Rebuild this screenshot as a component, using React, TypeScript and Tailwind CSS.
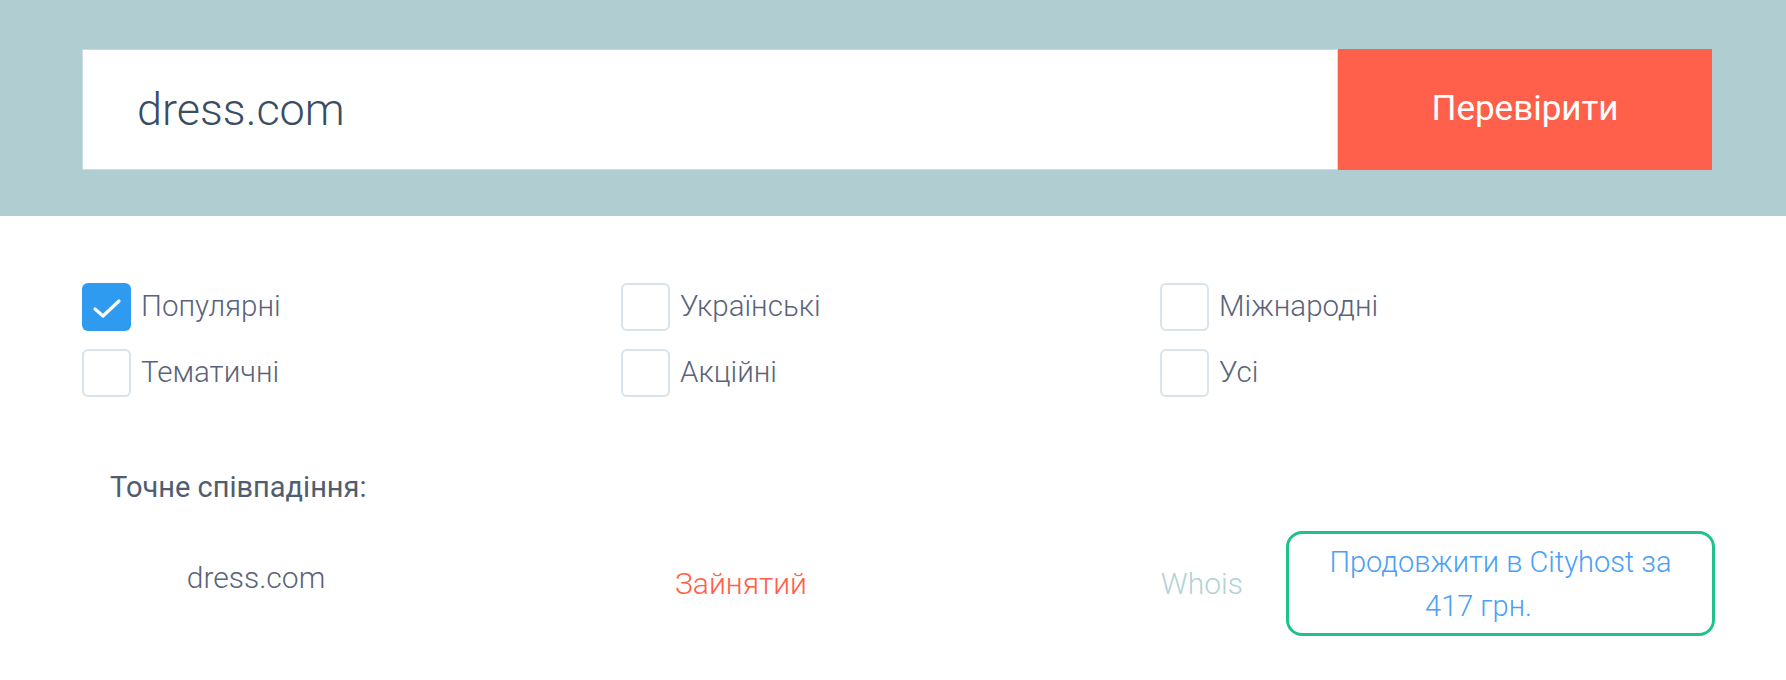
import React, { useState } from 'react';

const groups = [
  { id: 'popular', label: 'Популярні' },
  { id: 'ua', label: 'Українські' },
  { id: 'intl', label: 'Міжнародні' },
  { id: 'theme', label: 'Тематичні' },
  { id: 'promo', label: 'Акційні' },
  { id: 'all', label: 'Усі' },
];

function Checkbox({ checked, label, onToggle }: { checked: boolean; label: string; onToggle: () => void }) {
  return (
    <label className="flex items-center gap-[10px] cursor-pointer select-none" onClick={onToggle}>
      {checked ? (
        <span className="w-[49px] h-[48px] rounded-[6px] bg-[#2e9bf1] flex items-center justify-center">
          <svg width="48" height="48" viewBox="0 0 48 48" fill="none">
            <path d="M12 26 L20 33 L36 18" stroke="#ffffff" strokeWidth="3.2" strokeLinecap="round" strokeLinejoin="round" />
          </svg>
        </span>
      ) : (
        <span className="w-[49px] h-[48px] rounded-[6px] border-2 border-[#d8e3ec] bg-white" />
      )}
      <span className="text-[29.5px] font-light text-[#59647a] leading-none">{label}</span>
    </label>
  );
}

export default function App() {
  const [domain, setDomain] = useState('dress.com');
  const [checked, setChecked] = useState<string[]>(['popular']);

  const toggle = (id: string) => {
    setChecked((prev) => (prev.includes(id) ? prev.filter((x) => x !== id) : [...prev, id]));
  };

  return (
    <div className="w-[1786px] min-h-[680px] bg-white font-['Roboto','Liberation_Sans',sans-serif]">
      <div className="h-[216px] bg-[#b0ced2] pt-[49px]">
        <div className="ml-[82px] w-[1630px] h-[121px] flex">
          <input
            value={domain}
            onChange={(e) => setDomain(e.target.value)}
            className="flex-1 h-full bg-white border border-[#c9dde1] pl-[54px] text-[45px] font-light text-[#3b4d63] outline-none"
          />
          <button className="w-[374px] h-full bg-[#ff604b] text-white text-[35px] font-normal">
            Перевірити
          </button>
        </div>
      </div>

      <div className="ml-[82px] mt-[67px] grid grid-cols-[539px_539px_539px] gap-y-[18px]">
        {groups.map((g) => (
          <Checkbox key={g.id} label={g.label} checked={checked.includes(g.id)} onToggle={() => toggle(g.id)} />
        ))}
      </div>

      <div className="ml-[110px] mt-[73px] text-[29px] text-[#505c6f] leading-[34px]">Точне співпадіння:</div>

      <div className="ml-[82px] mt-[27px] w-[1633px] flex items-center">
        <div className="w-[348px] text-center text-[30px] font-light text-[#59647a] pb-[12px]">dress.com</div>
        <div className="w-[622px] text-center text-[30px] font-light text-[#ff5e49]">Зайнятий</div>
        <div className="flex-1 text-right pr-[43px] text-[30px] font-light text-[#b2d3d6]">Whois</div>
        <button className="w-[429px] h-[105px] border-[3px] border-[#1fc28c] rounded-[16px] text-[29px] font-light leading-[44px] text-[#4aa0f6] px-[20px]">
          <span className="block">Продовжити в Cityhost за</span>
          <span className="block pr-[44px]">417 грн.</span>
        </button>
      </div>
    </div>
  );
}
